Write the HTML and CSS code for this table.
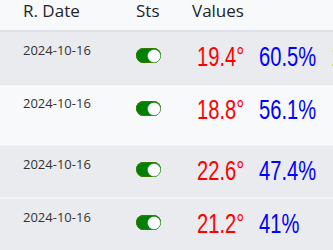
FILE: index.html
```html
<!DOCTYPE html>
<html>
<head>
<meta charset="utf-8">
<link rel="stylesheet" href="styles.css">
</head>
<body>
<div class="table">
  <div class="head">
    <div class="cell">R. Date</div>
    <div class="cell">Sts</div>
    <div class="cell">Values</div>
  </div>
  <div class="row gray r1">
    <div class="cell date">2024-10-16</div>
    <div class="cell sts"><span class="switch"><span class="knob"></span></span></div>
    <div class="cell vals"><span class="v temp">19.4°</span><span class="v hum">60.5%</span><span class="v extra">1013</span></div>
  </div>
  <div class="row light r2">
    <div class="cell date">2024-10-16</div>
    <div class="cell sts"><span class="switch"><span class="knob"></span></span></div>
    <div class="cell vals"><span class="v temp">18.8°</span><span class="v hum">56.1%</span></div>
  </div>
  <div class="row gray r3">
    <div class="cell date">2024-10-16</div>
    <div class="cell sts"><span class="switch"><span class="knob"></span></span></div>
    <div class="cell vals"><span class="v temp">22.6°</span><span class="v hum">47.4%</span></div>
  </div>
  <div class="row gray r4">
    <div class="cell date">2024-10-16</div>
    <div class="cell sts"><span class="switch"><span class="knob"></span></span></div>
    <div class="cell vals"><span class="v temp">21.2°</span><span class="v hum">41%</span></div>
  </div>
</div>
</body>
</html>
```

FILE: styles.css
```css
html, body {
  margin: 0;
  padding: 0;
  width: 333px;
  height: 250px;
  overflow: hidden;
  background: #e9ebee;
}
.table {
  display: flex;
  flex-direction: column;
  width: 333px;
  font-family: "Open Sans", "Noto Sans", sans-serif;
  color: #212529;
}
.head, .row {
  display: grid;
  grid-template-columns: 113px 56px 1fr;
  padding-left: 23px;
  white-space: nowrap;
}
.head {
  height: 30px;
  background: #f8f9fa;
  border-bottom: 2px solid #dee2e6;
  align-items: start;
  font-size: 17px;
  font-weight: 500;
  line-height: 22px;
  color: #212529;
}
.row { align-items: start; }
.gray { background: #e9ebee; }
.light { background: #f8f9fb; }
.r1 { height: 52px; border-bottom: 1px solid #e4e7ea; }
.r2 { height: 60px; border-bottom: 1px solid #f1f2f4; }
.r3 { height: 51px; border-bottom: 2px solid #f3f4f6; }
.r4 { height: 51px; }
.date {
  font-size: 13px;
  line-height: 18px;
  padding-top: 9px;
  color: #333;
}
.sts { padding-top: 16px; }
.switch {
  display: flex;
  justify-content: flex-end;
  align-items: center;
  width: 25px;
  height: 15px;
  padding: 0 1.5px;
  box-sizing: border-box;
  border-radius: 8px;
  background: #008000;
  box-shadow: inset 0 0 0 1px #3a7a00;
}
.knob {
  width: 12px;
  height: 12px;
  border-radius: 50%;
  background: #fff;
  box-shadow: 0 0 0 0.5px #9fd6e0;
}
.vals {
  display: flex;
  padding-top: 9px;
  padding-left: 5px;
  font-family: "Liberation Sans", Arial, sans-serif;
  font-size: 28px;
  line-height: 32px;
}
.v {
  display: inline-block;
  transform: scaleX(0.72);
  transform-origin: left center;
}
.temp { color: #ff0000; width: 62px; }
.hum { color: #0000ff; width: 72px; }
.extra { color: #8fd400; }
```
